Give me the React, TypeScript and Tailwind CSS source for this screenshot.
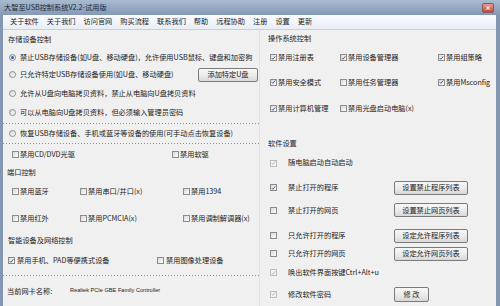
import React from "react";

function Cb({ c = false, d = false }: { c?: boolean; d?: boolean }) {
  return (
    <span
      className={`inline-flex w-[7px] h-[7px] shrink-0 items-center justify-center border ${
        d ? "border-[#bdbdbd] bg-[#f3f3f3]" : "border-[#8c8c8c] bg-linear-to-br from-[#d9d9d9] to-[#fcfcfc]"
      }`}
    >
      {c && (
        <svg width="6" height="6" viewBox="0 0 6 6">
          <path d="M0.9 3.1 L2.3 4.6 L5.2 1" fill="none" stroke={d ? "#b3b3b3" : "#3f5796"} strokeWidth="1.1" />
        </svg>
      )}
    </span>
  );
}

function Radio({ c = false }: { c?: boolean }) {
  return (
    <span className="inline-flex w-[7px] h-[7px] shrink-0 items-center justify-center rounded-full border border-[#8c8c8c] bg-linear-to-br from-[#d6d6d6] to-white">
      {c && <span className="w-[3px] h-[3px] rounded-full bg-[#2f66b9]" />}
    </span>
  );
}

function Btn({ children, cls }: { children: React.ReactNode; cls: string }) {
  return (
    <div
      className={`flex h-[14px] shrink-0 items-center justify-center rounded-[2px] border border-[#7b7b7b] bg-linear-to-b from-[#f7f7f7] via-[#ececec] to-[#d8d8d8] text-[#222] ${cls}`}
    >
      {children}
    </div>
  );
}

function Dash() {
  return <div className="h-px w-full bg-[repeating-linear-gradient(to_right,#8e8e8e_0_1px,transparent_1px_3px)]" />;
}

function CbItem({ c, d, label, gap = "ml-px" }: { c?: boolean; d?: boolean; label: string; gap?: string }) {
  return (
    <div className="flex items-center whitespace-nowrap">
      <Cb c={c} d={d} />
      <span className={gap}>{label}</span>
    </div>
  );
}

export default function App() {
  const menu = ["关于软件", "关于我们", "访问官网", "购买流程", "联系我们", "帮助", "远程协助", "注册", "设置", "更新"];
  return (
    <div className="flex h-[306px] w-[500px] flex-col overflow-hidden bg-[#8397b2] font-[family-name:'Noto_Sans_CJK_SC',sans-serif] text-[7.2px] leading-none text-[#222]">
      {/* title bar */}
      <div className="flex h-[15px] shrink-0 items-center bg-linear-to-b from-[#a9bbd0] to-[#8499b5] pl-[4px] pr-[6px]">
        <span className="text-[#1c2533]">大智至USB控制系统V2.2-试用版</span>
        <div className="ml-auto flex h-[10px] w-[12px] items-center justify-center rounded-[2px] border border-[#8d5a55] bg-linear-to-b from-[#e39a8d] to-[#c5493a]">
          <span className="text-[6px] font-bold text-white">×</span>
        </div>
      </div>

      {/* body */}
      <div className="ml-[3px] mr-[4px] flex min-h-0 flex-1 flex-col bg-[#f0f0f0]">
        {/* menu */}
        <div className="flex h-[15px] shrink-0 items-center gap-[8px] border-b border-[#c9d1dd] bg-linear-to-b from-[#fbfcfe] to-[#e8edf5] pl-[7px]">
          {menu.map((m) => (
            <span key={m}>{m}</span>
          ))}
        </div>

        <div className="flex min-h-0 flex-1">
          {/* left column */}
          <div className="flex w-[256px] shrink-0 flex-col">
            <div className="flex h-[19px] items-center pl-[5px]">存储设备控制</div>
            <div className="flex h-[17px] items-center gap-[4px] pl-[6px] whitespace-nowrap overflow-hidden">
              <Radio c />
              <span>禁止USB存储设备(如U盘、移动硬盘)，允许使用USB鼠标、键盘和加密狗</span>
            </div>
            <div className="flex h-[18px] items-center gap-[4px] pl-[6px] whitespace-nowrap">
              <Radio />
              <span>只允许特定USB存储设备使用(如U盘、移动硬盘)</span>
              <Btn cls="ml-auto mr-px w-[60px]">添加特定U盘</Btn>
            </div>
            <div className="flex h-[19px] items-center gap-[4px] pl-[6px] whitespace-nowrap">
              <Radio />
              <span>允许从U盘向电脑拷贝资料，禁止从电脑向U盘拷贝资料</span>
            </div>
            <div className="flex h-[19px] items-center gap-[4px] pl-[6px] whitespace-nowrap">
              <Radio />
              <span>可以从电脑向U盘拷贝资料，但必须输入管理员密码</span>
            </div>
            <div className="mt-px" />
            <Dash />
            <div className="flex h-[19px] items-center gap-[4px] pl-[6px] whitespace-nowrap">
              <Radio />
              <span>恢复USB存储设备、手机或蓝牙等设备的使用(可手动点击恢复设备)</span>
            </div>
            <Dash />
            <div className="flex h-[22px] items-center pl-[9px]">
              <div className="w-[160px]">
                <CbItem label="禁用CD/DVD光驱" />
              </div>
              <CbItem label="禁用软驱" />
            </div>
            <div className="flex h-[15px] items-center pl-[4px]">端口控制</div>
            <div className="flex h-[22px] items-center pl-[9px]">
              <div className="w-[68px]">
                <CbItem label="禁用蓝牙" />
              </div>
              <div className="w-[103px]">
                <CbItem label="禁用串口/并口(x)" />
              </div>
              <CbItem label="禁用1394" />
            </div>
            <div className="flex h-[32px] items-center pl-[9px]">
              <div className="w-[68px]">
                <CbItem label="禁用红外" />
              </div>
              <div className="w-[103px]">
                <CbItem label="禁用PCMCIA(x)" />
              </div>
              <CbItem label="禁用调制解调器(x)" />
            </div>
            <div className="flex h-[12px] items-center pl-[5px]">智能设备及网络控制</div>
            <div className="flex h-[29px] items-center pl-[5px]">
              <div className="w-[149px]">
                <CbItem c label="禁用手机、PAD等便携式设备" gap="ml-[2px]" />
              </div>
              <CbItem label="禁用图像处理设备" gap="ml-[2px]" />
            </div>
            <Dash />
            <div className="flex h-[30px] items-center pl-[4px]">
              <span className="w-[63px]">当前网卡名称:</span>
              <span className="font-[family-name:'Liberation_Sans',sans-serif] text-[5.6px]">Realtek PCIe GBE Family Controller</span>
            </div>
          </div>

          {/* right column */}
          <div className="flex min-w-0 flex-1 flex-col border-l border-[#e2e2e2]">
            <div className="flex h-[18px] items-center pl-[8px]">操作系统控制</div>
            <div className="flex h-[20px] items-center pl-[10px]">
              <div className="w-[70px]">
                <CbItem c label="禁用注册表" />
              </div>
              <div className="w-[98px]">
                <CbItem c label="禁用设备管理器" />
              </div>
              <CbItem c label="禁用组策略" />
            </div>
            <div className="flex h-[30px] items-center pl-[10px]">
              <div className="w-[70px]">
                <CbItem c label="禁用安全模式" />
              </div>
              <div className="w-[98px]">
                <CbItem label="禁用任务管理器" />
              </div>
              <CbItem c label="禁用Msconfig" />
            </div>
            <div className="flex h-[24px] items-center pl-[10px]">
              <div className="w-[70px]">
                <CbItem c label="禁用计算机管理" />
              </div>
              <CbItem label="禁用光盘启动电脑(x)" />
            </div>
            <div className="h-[14px]" />
            <div className="flex h-[18px] items-center pl-[8px]">软件设置</div>
            <div className="flex h-[22px] items-center pl-[10px]">
              <Cb c d />
              <span className="ml-[11px]">随电脑启动自动启动</span>
            </div>
            <div className="flex h-[28px] items-center pl-[10px]">
              <Cb c />
              <span className="ml-[11px] w-[106px]">禁止打开的程序</span>
              <Btn cls="w-[74px]">设置禁止程序列表</Btn>
            </div>
            <div className="flex h-[18px] items-center pl-[10px]">
              <Cb />
              <span className="ml-[11px] w-[106px]">禁止打开的网页</span>
              <Btn cls="w-[74px]">设置禁止网页列表</Btn>
            </div>
            <div className="h-[7px]" />
            <div className="flex h-[19px] items-center pl-[10px]">
              <Cb />
              <span className="ml-[11px] w-[106px]">只允许打开的程序</span>
              <Btn cls="w-[74px]">设定允许程序列表</Btn>
            </div>
            <div className="flex h-[18px] items-center pl-[10px]">
              <Cb />
              <span className="ml-[11px] w-[106px]">只允许打开的网页</span>
              <Btn cls="w-[74px]">设定允许网页列表</Btn>
            </div>
            <div className="flex h-[20px] items-center pl-[10px]">
              <Cb c d />
              <span className="ml-[11px]">唤出软件界面按键Ctrl+Alt+u</span>
            </div>
            <div className="flex h-[24px] items-center pl-[10px]">
              <Cb c d />
              <span className="ml-[11px] w-[106px]">修改软件密码</span>
              <Btn cls="w-[35px] h-[15px]">修 改</Btn>
            </div>
          </div>
        </div>
      </div>
    </div>
  );
}
